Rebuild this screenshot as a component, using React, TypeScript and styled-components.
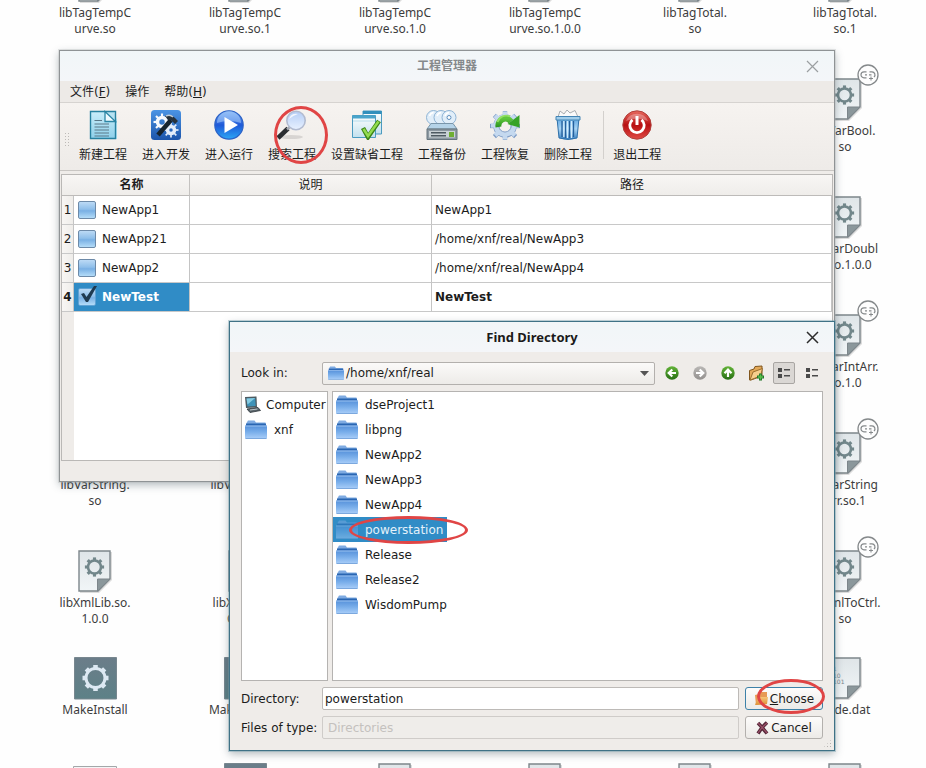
import React, { useState } from "react";
import styled, { createGlobalStyle, css } from "styled-components";

const ui = `"DejaVu Sans", "Noto Sans CJK SC", sans-serif`;
const shell = `"Noto Sans", "Noto Sans CJK SC", sans-serif`;

const Global = createGlobalStyle`
  * { box-sizing: border-box; }
  body { margin: 0; background: #fefefe; font: 12px/16px ${ui}; color: #1c1c1c; }
  button, input, select { font: inherit; color: inherit; }
`;

/* ---------- desktop ---------- */

const Desktop = styled.main`
  position: relative;
  height: 100vh;
  overflow: hidden;
  background: #fefefe;
`;

const IconGrid = styled.div`
  display: grid;
  grid-template-columns: repeat(6, 150px);
  grid-template-rows: repeat(5, 118px) 107px 106px 60px;
  margin: -40px 0 0 20px;
`;

const DesktopItem = styled.div<{ $col: number; $row: number }>`
  grid-column: ${(p) => p.$col};
  grid-row: ${(p) => p.$row};
  display: flex;
  flex-direction: column;
  align-items: center;
  gap: 3px;
`;

const IconBox = styled.div`
  position: relative;
  display: flex;
  height: 42px;
  svg { display: block; overflow: visible; }
`;

const LinkBadge = styled.span`
  position: absolute;
  top: -14px;
  right: -17px;
  display: flex;
`;

const Caption = styled.span`
  font: 12px/16px ${shell};
  color: #3c3c3c;
  text-align: center;
  white-space: pre-line;
`;

/* ---------- windows ---------- */

const Win = styled.section<{ $active?: boolean }>`
  position: absolute;
  display: flex;
  flex-direction: column;
  border: 1px solid ${(p) => (p.$active ? "#3f7286" : "#8f9395")};
  outline: 1px solid ${(p) => (p.$active ? "#6e9aab66" : "#b4b6b855")};
  background: #efece9;
  box-shadow: 0 3px 8px rgba(40, 60, 70, 0.35);
`;

const ManagerWin = styled(Win)`
  top: 50px;
  left: 59px;
  right: 91px;
`;

const DialogWin = styled(Win)`
  top: 321px;
  left: 229px;
  right: 91px;
`;

const TitleBar = styled.header`
  display: grid;
  grid-template-columns: 30px 1fr 30px;
  align-items: center;
  height: 30px;
  padding: 0 7px;
  background: linear-gradient(#f1f6f8, #f4f6f9);
`;

const Title = styled.h1<{ $muted?: boolean }>`
  grid-column: 2;
  margin: 0;
  font: 700 ${(p) => (p.$muted ? "12px" : "13px")}/16px ${shell};
  color: ${(p) => (p.$muted ? "#85898b" : "#1a1a1a")};
  text-align: center;
`;

const CloseButton = styled.button<{ $muted?: boolean }>`
  display: flex;
  justify-content: center;
  padding: 4px;
  border: 0;
  background: none;
  color: ${(p) => (p.$muted ? "#9b9fa1" : "#2c2c2c")};
`;

const MenuBar = styled.nav`
  display: flex;
  gap: 15px;
  height: 22px;
  padding: 0 10px;
  align-items: center;
  background: #edeae7;
  border-bottom: 1px solid #d6d3d0;
`;

const MenuButton = styled.button`
  padding: 0;
  border: 0;
  background: none;
`;

const Toolbar = styled.div`
  display: flex;
  align-items: stretch;
  height: 68px;
  padding: 6px 4px 0;
  gap: 15px;
  background: linear-gradient(#f6f3f0, #eeebe8);
  border-bottom: 1px solid #c9c6c3;
`;

const Grip = styled.span`
  align-self: center;
  width: 5px;
  height: 16px;
  margin-right: -5px;
  background: radial-gradient(circle, #bdbab7 1px, transparent 1px) 0 0 / 3px 3px;
`;

const ToolButton = styled.button`
  position: relative;
  display: flex;
  flex-direction: column;
  align-items: center;
  gap: 7px;
  padding: 1px 0 0;
  border: 0;
  background: none;
  white-space: nowrap;
  svg { display: block; flex: none; }
`;

const Separator = styled.span`
  width: 1px;
  height: 48px;
  margin: 2px -6px 0 -4px;
  background: #d3d0cd;
`;

const Mark = styled.span<{ $w: number; $h: number; $x: number; $y: number }>`
  position: absolute;
  z-index: 2;
  left: ${(p) => p.$x}px;
  top: ${(p) => p.$y}px;
  width: ${(p) => p.$w}px;
  height: ${(p) => p.$h}px;
  border: 3px solid #e04545;
  border-radius: 50%;
  pointer-events: none;
`;

/* ---------- project table ---------- */

const TableView = styled.div`
  flex: 1;
  min-height: 287px;
  margin: 3px 1px 20px 1px;
  border: 1px solid #bab8b6;
  background: linear-gradient(90deg, #efece9 12px, #fff 12px);
`;

const Table = styled.table`
  width: 100%;
  border-collapse: separate;
  border-spacing: 0;
  table-layout: fixed;
  background: #fff;
`;

const Th = styled.th<{ $bold?: boolean; $w?: number; $edge?: boolean }>`
  width: ${(p) => (p.$w ? `${p.$w}px` : "auto")};
  height: 21px;
  padding: 0;
  font-weight: ${(p) => (p.$bold ? 700 : 400)};
  background: linear-gradient(#f8f6f4, #efedea);
  border-bottom: 1px solid #bdbbb9;
  border-right: ${(p) => (p.$edge ? "1px solid #c4c2c0" : "0")};
`;

const cellLine = css`
  height: 29px;
  padding: 0;
  border-right: 1px solid #c4c4c4;
  border-bottom: 1px solid #c8c8c8;
`;

const RowHead = styled.th<{ $on: boolean }>`
  ${cellLine}
  font-weight: ${(p) => (p.$on ? 700 : 400)};
  text-align: center;
  background: linear-gradient(90deg, #f8f6f4, #efedea);
`;

const Td = styled.td<{ $on?: boolean; $bold?: boolean }>`
  ${cellLine}
  padding: 0 3px;
  font-weight: ${(p) => (p.$bold ? 700 : 400)};
  color: ${(p) => (p.$on ? "#fff" : "#1c1c1c")};
  background: ${(p) => (p.$on ? "#308cc6" : "#fff")};
`;

const NameLabel = styled.label`
  position: relative;
  display: flex;
  align-items: center;
  gap: 6px;
  padding-left: 1px;
`;

const Tick = styled.input`
  appearance: none;
  width: 18px;
  height: 18px;
  margin: 0;
  border: 1px solid #6d8aa8;
  border-radius: 2px;
  background: linear-gradient(#bcdaf5 0%, #8fbfea 45%, #79b0e4 55%, #b4dcf8 100%);
  &:checked { border-color: #5fa2d4; }
`;

const TickMark = styled.svg`
  position: absolute;
  left: 3px;
  top: -3px;
`;

/* ---------- find directory dialog ---------- */

const DialogBody = styled.div`
  display: flex;
  flex-direction: column;
  padding: 8px 11px 11px 11px;
`;

const LookRow = styled.div`
  display: flex;
  align-items: center;
  height: 26px;
`;

const FieldLabel = styled.label`
  width: 81px;
  flex: none;
  white-space: nowrap;
`;

const Combo = styled.div<{ $muted?: boolean }>`
  position: relative;
  flex: 1;
  display: flex;
  align-items: center;
  gap: 2px;
  height: 23px;
  padding: 0 5px;
  border: 1px solid ${(p) => (p.$muted ? "#cfccc9" : "#b3b0ad")};
  border-radius: 2px;
  background: ${(p) => (p.$muted ? "#efedea" : "linear-gradient(#fbfaf9, #edebe8)")};
  select {
    appearance: none;
    flex: 1;
    height: 20px;
    padding: 0;
    border: 0;
    outline: 0;
    background: none;
    color: ${(p) => (p.$muted ? "#c4c1be" : "#1c1c1c")};
    opacity: 1;
  }
`;

const NavButtons = styled.div`
  display: flex;
  gap: 6px;
  margin-left: 6px;
`;

const NavButton = styled.button<{ $down?: boolean }>`
  display: flex;
  align-items: center;
  justify-content: center;
  width: 22px;
  height: 22px;
  padding: 0;
  border: 1px solid ${(p) => (p.$down ? "#a9a6a3" : "transparent")};
  border-radius: 2px;
  background: ${(p) => (p.$down ? "#dad7d4" : "none")};
`;

const Panes = styled.div`
  display: grid;
  grid-template-columns: 87px minmax(0, 1fr);
  gap: 4px;
  margin-top: 5px;
`;

const Pane = styled.ul`
  min-height: 290px;
  margin: 0;
  padding: 0;
  list-style: none;
  border: 1px solid #b5b3b1;
  background: #fff;
`;

const Entry = styled.button<{ $on?: boolean; $small?: boolean }>`
  position: relative;
  display: flex;
  align-items: center;
  gap: ${(p) => (p.$small ? "5px" : "7px")};
  height: 25px;
  padding: 0 4px 0 ${(p) => (p.$small ? "2px" : "3px")};
  border: 0;
  color: ${(p) => (p.$on ? "#e4f1fa" : "#1c1c1c")};
  background: ${(p) => (p.$on ? "#308cc6" : "none")};
  svg { flex: none; opacity: ${(p) => (p.$on ? 0.5 : 1)}; }
`;

const FormRow = styled.div`
  display: flex;
  align-items: center;
  margin-top: 6px;
`;

const TextField = styled.input`
  flex: 1;
  min-width: 0;
  height: 23px;
  padding: 0 2px;
  border: 1px solid #bdbab7;
  border-radius: 2px;
  outline: 0;
  background: #fff;
`;

const PushButton = styled.button<{ $primary?: boolean }>`
  position: relative;
  display: flex;
  align-items: center;
  justify-content: center;
  gap: 2px;
  width: 78px;
  height: 23px;
  margin-left: 6px;
  padding: 0;
  border: 1px solid ${(p) => (p.$primary ? "#3d81a8" : "#b3b0ad")};
  border-radius: 3px;
  background: linear-gradient(#fdfcfb, #eceae7);
  svg { flex: none; }
`;

const SizeGrip = styled.span`
  position: absolute;
  right: 2px;
  bottom: 2px;
  width: 9px;
  height: 9px;
  background: radial-gradient(circle, #b5b2af 1px, transparent 1px) 0 0 / 3px 3px;
  clip-path: polygon(100% 0, 100% 100%, 0 100%);
`;

/* ---------- drawings ---------- */

const Defs = styled.svg`
  position: absolute;
`;

function Gradients() {
  const g = (id: string, ...stops: string[]) => (
    <linearGradient id={id} x1="0" y1="0" x2="0" y2="1" key={id}>
      {stops.map((c, i) => (
        <stop key={i} offset={i / (stops.length - 1)} stopColor={c} />
      ))}
    </linearGradient>
  );
  return (
    <Defs width="0" height="0" aria-hidden>
      <defs>
        {g("doc", "#dfe5e8", "#f1f5f7")}
        {g("exec", "#6b7d89", "#5d8187")}
        {g("folder", "#5590da", "#79aeea", "#a8cdf8")}
        {g("paper", "#c9edfa", "#8ed0ea")}
        {g("blue", "#4b94e4", "#1c55ab")}
        {g("orb", "#7cb2f5", "#1e58d8", "#2ca7f5")}
        {g("lens", "#b4cdf6", "#e8f1ff")}
        {g("pane", "#fdfefe", "#c3e1ee")}
        {g("bin", "#5da4e0", "#a8d5f5", "#3b82c4")}
        {g("red", "#e86a5f", "#b80f12", "#e04b45")}
        {g("green", "#63b338", "#276f14")}
        {g("leaf", "#5fc63c", "#2a9420")}
        {g("grey", "#b9b7b5", "#94918f")}
        {g("orange", "#f6c478", "#dd8f35")}
      </defs>
    </Defs>
  );
}

function Gear({ cx, cy, r, w, color }: { cx: number; cy: number; r: number; w: number; color: string }) {
  return (
    <g stroke={color} fill="none">
      <circle cx={cx} cy={cy} r={r} strokeWidth={w} />
      {[0, 45, 90, 135, 180, 225, 270, 315].map((a) => (
        <path key={a} d={`M${cx} ${cy - r}V${cy - r - w - 0.5}`} strokeWidth={r * 0.48} transform={`rotate(${a} ${cx} ${cy})`} />
      ))}
    </g>
  );
}

function DocIcon({ data }: { data?: boolean }) {
  return (
    <svg width="34" height="42" viewBox="0 0 34 42">
      <path d="M2 2H34V30L21 43H2Z" fill="#00000022" />
      <path d="M1 1H32V29L20 41H1Z" fill="url(#doc)" stroke="#7d868b" strokeWidth="1.4" />
      <path d="M19.5 29H32L19.5 41Z" fill="#8b979b" stroke="#7d868b" />
      {data ? (
        <g fontFamily="DejaVu Sans" fontSize="6" fill="#76868d">
          <text x="1" y="14">01</text>
          <text x="5" y="21">10</text>
          <text x="5" y="27">101</text>
        </g>
      ) : (
        <Gear cx={16.5} cy={17} r={6.5} w={2.6} color="#72878b" />
      )}
    </svg>
  );
}

const ExecIcon = () => (
  <svg width="43" height="42" viewBox="0 0 43 42">
    <path d="M.5.5H42.5V42H.5Z" fill="url(#exec)" stroke="#78878f" />
    <Gear cx={21.5} cy={21} r={9.5} w={3} color="#dde9f3" />
  </svg>
);

const WideIcon = () => (
  <svg width="44" height="38" viewBox="0 0 44 38">
    <path d="M.5 3.5H43.5V38H.5Z" fill="#f4f6f7" stroke="#a3a7a9" />
  </svg>
);

const LinkIcon = () => (
  <svg width="22" height="22" viewBox="0 0 22 22" fill="none" stroke="#85898b">
    <circle cx="11" cy="11" r="10" fill="#fdfdfd" strokeWidth="1.3" />
    <path d="M9.5 7.8H7a3 3 0 0 0 0 6H9.500M12.5 7.8H15a3 3 0 0 1 2 5.200M8 10.8H10M12 10.8H14.500" strokeWidth="1.2" />
    <path d="M14 12.5V16.500M12 14.5H16" />
  </svg>
);

const CloseIcon = ({ weight }: { weight: number }) => (
  <svg width="13" height="13" viewBox="0 0 13 13" stroke="currentColor" strokeWidth={weight}>
    <path d="M1 1L12 12M12 1L1 12" />
  </svg>
);

const FolderIcon = ({ w = 22, h = 19 }: { w?: number; h?: number }) => (
  <svg width={w} height={h} viewBox="0 0 22 19">
    <path d="M1.5 3L3 .5H9.500L11 2.500H20.5V7H1.500Z" fill="#7fabe2" />
    <path d="M1 3.500H21V6H1Z" fill="#2a66b2" />
    <path d="M0 5.500H22V18.500H0Z" fill="url(#folder)" />
    <path d="M0 6H22" stroke="#9cc3f0" />
    <path d="M.5 18.5H21.5" stroke="#7ba8de" />
  </svg>
);

const ComputerIcon = () => (
  <svg width="17" height="17" viewBox="0 0 17 17">
    <path d="M1 1L12.500 .5L13 11.500L2 12Z" fill="#4d5a60" />
    <path d="M2.5 2.5L11.2 2L11.700 10L3.4 10.500Z" fill="#3f93b8" />
    <path d="M2.5 2.500L11.2 2L3.500 8.500Z" fill="#85cbe2" />
    <path d="M3 13L14 11.500L16.500 14.500L6 16.500Z" fill="#59646a" stroke="#2c3438" strokeWidth=".8" />
    <path d="M6 14L13.5 13" stroke="#bcc6ca" />
  </svg>
);

const box = { width: 32, height: 30, viewBox: "0 0 32 30" };

const NewIcon = () => (
  <svg {...box}>
    <path d="M3 1H27L30 10V29H3Z" fill="#b7e3f3" />
    <path d="M3.500 1.500H18L28.500 11.500V28.500H3.500Z" fill="url(#paper)" />
    <path d="M18 1.5L28.500 11.500H18Z" fill="#eefaff" stroke="#2b86a5" strokeWidth="1.3" />
    <path d="M18 1.500H28.500V28.500H3.500V1.500H18" fill="none" stroke="#2781a0" strokeWidth="1.4" />
    <path d="M7.5 10.5H15M7.5 14H22M7.5 17H22M7.5 20H22M7.5 23H22M7.5 26H22" stroke="#5a7888" strokeWidth="1.2" />
  </svg>
);

const DevIcon = () => (
  <svg {...box}>
    <rect x="1" width="30" height="30" rx="3.5" fill="url(#blue)" />
    <Gear cx={12} cy={12} r={4.5} w={3.5} color="#f6f9fd" />
    <Gear cx={21} cy={20} r={3.5} w={3.5} color="#e5eefa" />
    <path d="M8 25L21 10" stroke="#17242f" strokeWidth="4.5" />
    <path d="M15 6Q21 3 25 8L28 11L25 14L21 10L18 10Z" fill="#26323c" />
    <path d="M16 6Q20 4 23 7" stroke="#bfcbd5" fill="none" strokeWidth="1.5" />
  </svg>
);

const RunIcon = () => (
  <svg {...box}>
    <circle cx="16" cy="15" r="14.2" fill="url(#orb)" stroke="#2c62c6" strokeWidth="1.2" />
    <path d="M4 13A12 12 0 0 1 28 13Q16 9 4 13Z" fill="#a9cdfb" opacity=".55" />
    <path d="M11.5 7L25 15L11.5 23Z" fill="#fff" />
  </svg>
);

const SearchIcon = () => (
  <svg {...box}>
    <ellipse cx="15" cy="27" rx="12" ry="2" fill="#0000001c" />
    <path d="M2 28L12 18.5" stroke="#2a2d31" strokeWidth="4.5" />
    <path d="M11 19.5L15 16" stroke="#a4a9b0" strokeWidth="2.5" />
    <circle cx="20" cy="10.5" r="9.2" fill="url(#lens)" stroke="#b2bbd0" strokeWidth="1.6" />
    <path d="M13 9Q15 3 22 4Q16 6 13 9Z" fill="#fff" opacity=".8" />
  </svg>
);

const DefaultIcon = () => (
  <svg {...box}>
    <path d="M12 1H30.5V24H12Z" fill="url(#pane)" stroke="#4b9bc0" />
    <path d="M12 1H30.5V4H12Z" fill="#318fbc" />
    <path d="M1.5 5.5H24.5V27.5H1.5Z" fill="url(#pane)" stroke="#4b9bc0" />
    <path d="M1.5 5.5H24.5V8.5H1.5Z" fill="#4aa4cb" />
    <path d="M2 11H24" stroke="#b7dceb" />
    <path d="M12 18L17 27L28 11" fill="none" stroke="#3c8516" strokeWidth="4.6" />
    <path d="M12.5 19L17 26L27.5 11.5" fill="none" stroke="#92dc4f" strokeWidth="2.6" />
  </svg>
);

const BackupIcon = () => (
  <svg {...box}>
    {[7.500, 15, 23].map((x) => (
      <g key={x}>
        <ellipse cx={x} cy="7.5" rx="7" ry="7" fill="#e1eef9" stroke="#8fb4d5" />
        <path d={`M${x - 4} 6Q${x - 3} 3 ${x} 2.500`} fill="none" stroke="#fff" strokeWidth="1.500" />
      </g>
    ))}
    <ellipse cx="23" cy="7.5" rx="2" ry="2" fill="#fff" stroke="#5f8fbd" />
    <path d="M5 13.500H27L31 19H1Z" fill="#b5d3e8" stroke="#7a96aa" />
    <path d="M1 19H31V29.5H1Z" fill="#8d99a2" stroke="#66747d" />
    <path d="M3 21H29V27.500H3Z" fill="#c9d1d5" />
    <path d="M5 22.800H20M5 25.800H20" stroke="#4e5a62" strokeWidth="1.4" />
    <path d="M23 22H28V27H23Z" fill="#6fae33" />
  </svg>
);

const RestoreIcon = () => (
  <svg {...box}>
    <Gear cx={16} cy={16} r={9} w={5.5} color="#7f9dc6" />
    <Gear cx={16} cy={15.500} r={9} w={4.500} color="#c5d9ef" />
    <circle cx="16" cy="16" r="6" fill="#f4f1ee" stroke="#8aa6cc" />
    <path d="M9.500 17A7 7 0 0 1 22 11.500" fill="none" stroke="url(#leaf)" strokeWidth="6" />
    <path d="M18.500 14L30.500 5V17.500Z" fill="#37a327" />
    <path d="M8.500 12A9 9 0 0 1 21 6.500" fill="none" stroke="#90df62" strokeWidth="1.8" />
  </svg>
);

const TrashIcon = () => (
  <svg {...box}>
    <path d="M6 7L8 1L12 4L15 0L18 3L23 .5L26 7Z" fill="#fafafa" stroke="#a8adb1" />
    <path d="M5 8H27L25 28Q16 31 7 28Z" fill="url(#bin)" stroke="#2e70a9" />
    <path d="M10 11V27M13.5 11V28M17.5 11V28M21.5 11V27" stroke="#255f9b" strokeWidth="1.3" />
    <path d="M11.8 11V27M15.5 11V28M19.5 11V28" stroke="#d2ecfc" strokeWidth="1.3" />
    <path d="M4 6.5H28V10H4Z" fill="#a1cdea" stroke="#4384b4" />
  </svg>
);

const ExitIcon = () => (
  <svg {...box}>
    <circle cx="16" cy="15" r="14.2" fill="url(#red)" stroke="#b0403c" />
    <path d="M5 11A12 12 0 0 1 27 11Q16 6 5 11Z" fill="#fff" opacity=".3" />
    <path d="M11.5 9.8A7.200 7.200 0 1 0 20.5 9.8" fill="none" stroke="#fff" strokeWidth="2.8" />
    <path d="M16 6V15" stroke="#fff" strokeWidth="3" />
  </svg>
);

const Arrow = ({ turn, fill }: { turn: number; fill: string }) => (
  <svg width="14" height="14" viewBox="0 0 14 14">
    <circle cx="7" cy="7" r="6.7" fill={`url(#${fill})`} />
    <path d="M7 11V4M3.5 7.3L7 3.7L10.5 7.3" fill="none" stroke="#fff" strokeWidth="2.2" transform={`rotate(${turn} 7 7)`} />
  </svg>
);

const NewFolderIcon = () => (
  <svg width="17" height="16" viewBox="0 0 17 16">
    <path d="M1.5 5.5L6 4L7 1.5L14 1V11L3 15H1.5Z" fill="#e2a858" stroke="#80551d" />
    <path d="M2 15L5 7L14.5 3.5L12.5 11Z" fill="#f7ce8c" stroke="#9a6d2d" />
    <path d="M12.5 8.500V15.500M9 12H16" stroke="#23762b" strokeWidth="3" />
    <path d="M12.5 9.500V14.500M10 12H15" stroke="#58bf4c" strokeWidth="1.4" />
  </svg>
);

const ListIcon = () => (
  <svg width="12" height="10" viewBox="0 0 12 10" fill="#4a4a4a">
    <path d="M0 0H4V4H0ZM0 6H4V10H0ZM6 1H12V2.5H6ZM6 7H12V8.5H6Z" />
  </svg>
);

const Caret = () => (
  <svg width="9" height="5" viewBox="0 0 9 5">
    <path d="M0 0H9L4.5 5Z" fill="#555" />
  </svg>
);

const OpenIcon = () => (
  <svg width="14" height="15" viewBox="0 0 14 15">
    <path d="M1 4L5 3L7 1H13V13L2 14Z" fill="#e79a55" />
    <path d="M1 14L4 6H14L13 13Z" fill="url(#orange)" />
  </svg>
);

const CancelIcon = () => (
  <svg width="13" height="14" viewBox="0 0 13 14" fill="none">
    <path d="M2 2Q5 5 11 12.5M11 1.5Q6 6 2 12.5" stroke="#55293a" strokeWidth="3.6" />
    <path d="M2 2Q5 5 11 12M11 2Q6 6 2 12" stroke="#9b5068" strokeWidth="1.2" />
  </svg>
);

/* ---------- data ---------- */

type Kind = "lib" | "link" | "exec" | "data" | "wide";
const items: [number, number, Kind, string][] = [
  [1, 1, "lib", "libTagTempC\nurve.so"],
  [2, 1, "lib", "libTagTempC\nurve.so.1"],
  [3, 1, "lib", "libTagTempC\nurve.so.1.0"],
  [4, 1, "lib", "libTagTempC\nurve.so.1.0.0"],
  [5, 1, "lib", "libTagTotal.\nso"],
  [6, 1, "lib", "libTagTotal.\nso.1"],
  [6, 2, "link", "libVarBool.\nso"],
  [6, 3, "lib", "libVarDoubl\ne.so.1.0.0"],
  [6, 4, "link", "libVarIntArr.\nso.1.0"],
  [1, 5, "lib", "libVarString.\nso"],
  [2, 5, "lib", "libVarString.\nso.1"],
  [6, 5, "link", "libVarString\nArr.so.1"],
  [1, 6, "lib", "libXmlLib.so.\n1.0.0"],
  [2, 6, "lib", "libXmlToCtr\nCtrl.so"],
  [6, 6, "link", "libXmlToCtrl.\nso"],
  [1, 7, "exec", "MakeInstall"],
  [2, 7, "exec", "MakeInstall2"],
  [6, 7, "data", "node.dat"],
  [1, 8, "wide", ""],
  [2, 8, "exec", ""],
  [3, 8, "lib", ""],
  [4, 8, "lib", ""],
  [5, 8, "lib", ""],
  [6, 8, "lib", ""],
];

const projects = [
  { name: "NewApp1", path: "NewApp1" },
  { name: "NewApp21", path: "/home/xnf/real/NewApp3" },
  { name: "NewApp2", path: "/home/xnf/real/NewApp4" },
  { name: "NewTest", path: "NewTest" },
];

const folders = ["dseProject1", "libpng", "NewApp2", "NewApp3", "NewApp4", "powerstation", "Release", "Release2", "WisdomPump"];

const tools = [
  { label: "新建工程", Icon: NewIcon },
  { label: "进入开发", Icon: DevIcon },
  { label: "进入运行", Icon: RunIcon },
  { label: "搜索工程", Icon: SearchIcon, marked: true },
  { label: "设置缺省工程", Icon: DefaultIcon },
  { label: "工程备份", Icon: BackupIcon },
  { label: "工程恢复", Icon: RestoreIcon },
  { label: "删除工程", Icon: TrashIcon },
];

/* ---------- composition ---------- */

function ProjectManager() {
  const [current, setCurrent] = useState(3);
  return (
    <ManagerWin aria-label="工程管理器">
      <TitleBar>
        <Title $muted>工程管理器</Title>
        <CloseButton $muted aria-label="Close"><CloseIcon weight={1.2} /></CloseButton>
      </TitleBar>
      <MenuBar>
        <MenuButton>文件(<u>F</u>)</MenuButton>
        <MenuButton>操作</MenuButton>
        <MenuButton>帮助(<u>H</u>)</MenuButton>
      </MenuBar>
      <Toolbar role="toolbar">
        <Grip />
        {tools.map(({ label, Icon, marked }) => (
          <ToolButton key={label}>
            <Icon />
            {label}
            {marked && <Mark $x={6} $y={-3} $w={54} $h={58} />}
          </ToolButton>
        ))}
        <Separator />
        <ToolButton><ExitIcon />退出工程</ToolButton>
      </Toolbar>
      <TableView>
        <Table>
          <thead>
            <tr>
              <Th $w={12} aria-label="#" />
              <Th $bold $edge $w={116}>名称</Th>
              <Th $edge $w={242}>说明</Th>
              <Th>路径</Th>
            </tr>
          </thead>
          <tbody>
            {projects.map((p, i) => {
              const on = i === current;
              return (
                <tr key={p.name}>
                  <RowHead scope="row" $on={on}>{i + 1}</RowHead>
                  <Td $on={on} $bold={on}>
                    <NameLabel>
                      <Tick type="checkbox" checked={on} onChange={() => setCurrent(i)} />
                      {on && (
                        <TickMark width="17" height="19" viewBox="0 0 17 19">
                          <path d="M1 9L4 8L6.5 12L14 1H17L8 17H6Z" fill="#1f3a50" />
                        </TickMark>
                      )}
                      {p.name}
                    </NameLabel>
                  </Td>
                  <Td />
                  <Td $bold={on}>{p.path}</Td>
                </tr>
              );
            })}
          </tbody>
        </Table>
      </TableView>
    </ManagerWin>
  );
}

function FindDirectory() {
  const [dir, setDir] = useState("powerstation");
  return (
    <DialogWin $active role="dialog" aria-label="Find Directory">
      <TitleBar>
        <Title>Find Directory</Title>
        <CloseButton aria-label="Close"><CloseIcon weight={1.5} /></CloseButton>
      </TitleBar>
      <DialogBody>
        <LookRow>
          <FieldLabel htmlFor="look">Look in:</FieldLabel>
          <Combo>
            <FolderIcon w={16} h={14} />
            <select id="look"><option>/home/xnf/real</option></select>
            <Caret />
          </Combo>
          <NavButtons>
            <NavButton aria-label="Back"><Arrow turn={-90} fill="green" /></NavButton>
            <NavButton aria-label="Forward" disabled><Arrow turn={90} fill="grey" /></NavButton>
            <NavButton aria-label="Parent directory"><Arrow turn={0} fill="green" /></NavButton>
            <NavButton aria-label="Create new folder"><NewFolderIcon /></NavButton>
            <NavButton $down aria-label="List view"><ListIcon /></NavButton>
            <NavButton aria-label="Detail view"><ListIcon /></NavButton>
          </NavButtons>
        </LookRow>
        <Panes>
          <Pane>
            <li><Entry $small><ComputerIcon />Computer</Entry></li>
            <li><Entry><FolderIcon />xnf</Entry></li>
          </Pane>
          <Pane>
            {folders.map((f) => (
              <li key={f}>
                <Entry $on={f === dir} onClick={() => setDir(f)}>
                  <FolderIcon />
                  {f}
                  {f === "powerstation" && <Mark $x={16} $y={-1} $w={119} $h={28} />}
                </Entry>
              </li>
            ))}
          </Pane>
        </Panes>
        <FormRow>
          <FieldLabel htmlFor="dir">Directory:</FieldLabel>
          <TextField id="dir" value={dir} onChange={(e) => setDir(e.target.value)} />
          <PushButton $primary>
            <OpenIcon />
            <span><u>C</u>hoose</span>
            <Mark $x={11} $y={-9} $w={68} $h={35} />
          </PushButton>
        </FormRow>
        <FormRow>
          <FieldLabel htmlFor="type">Files of type:</FieldLabel>
          <Combo $muted>
            <select id="type" disabled><option>Directories</option></select>
          </Combo>
          <PushButton><CancelIcon />Cancel</PushButton>
        </FormRow>
      </DialogBody>
      <SizeGrip />
    </DialogWin>
  );
}

export default function App() {
  return (
    <Desktop>
      <Global />
      <Gradients />
      <IconGrid>
        {items.map(([col, row, kind, text]) => (
          <DesktopItem key={`${col}-${row}`} $col={col} $row={row}>
            <IconBox>
              {kind === "exec" ? <ExecIcon /> : kind === "wide" ? <WideIcon /> : <DocIcon data={kind === "data"} />}
              {kind === "link" && <LinkBadge><LinkIcon /></LinkBadge>}
            </IconBox>
            <Caption>{text}</Caption>
          </DesktopItem>
        ))}
      </IconGrid>
      <ProjectManager />
      <FindDirectory />
    </Desktop>
  );
}
